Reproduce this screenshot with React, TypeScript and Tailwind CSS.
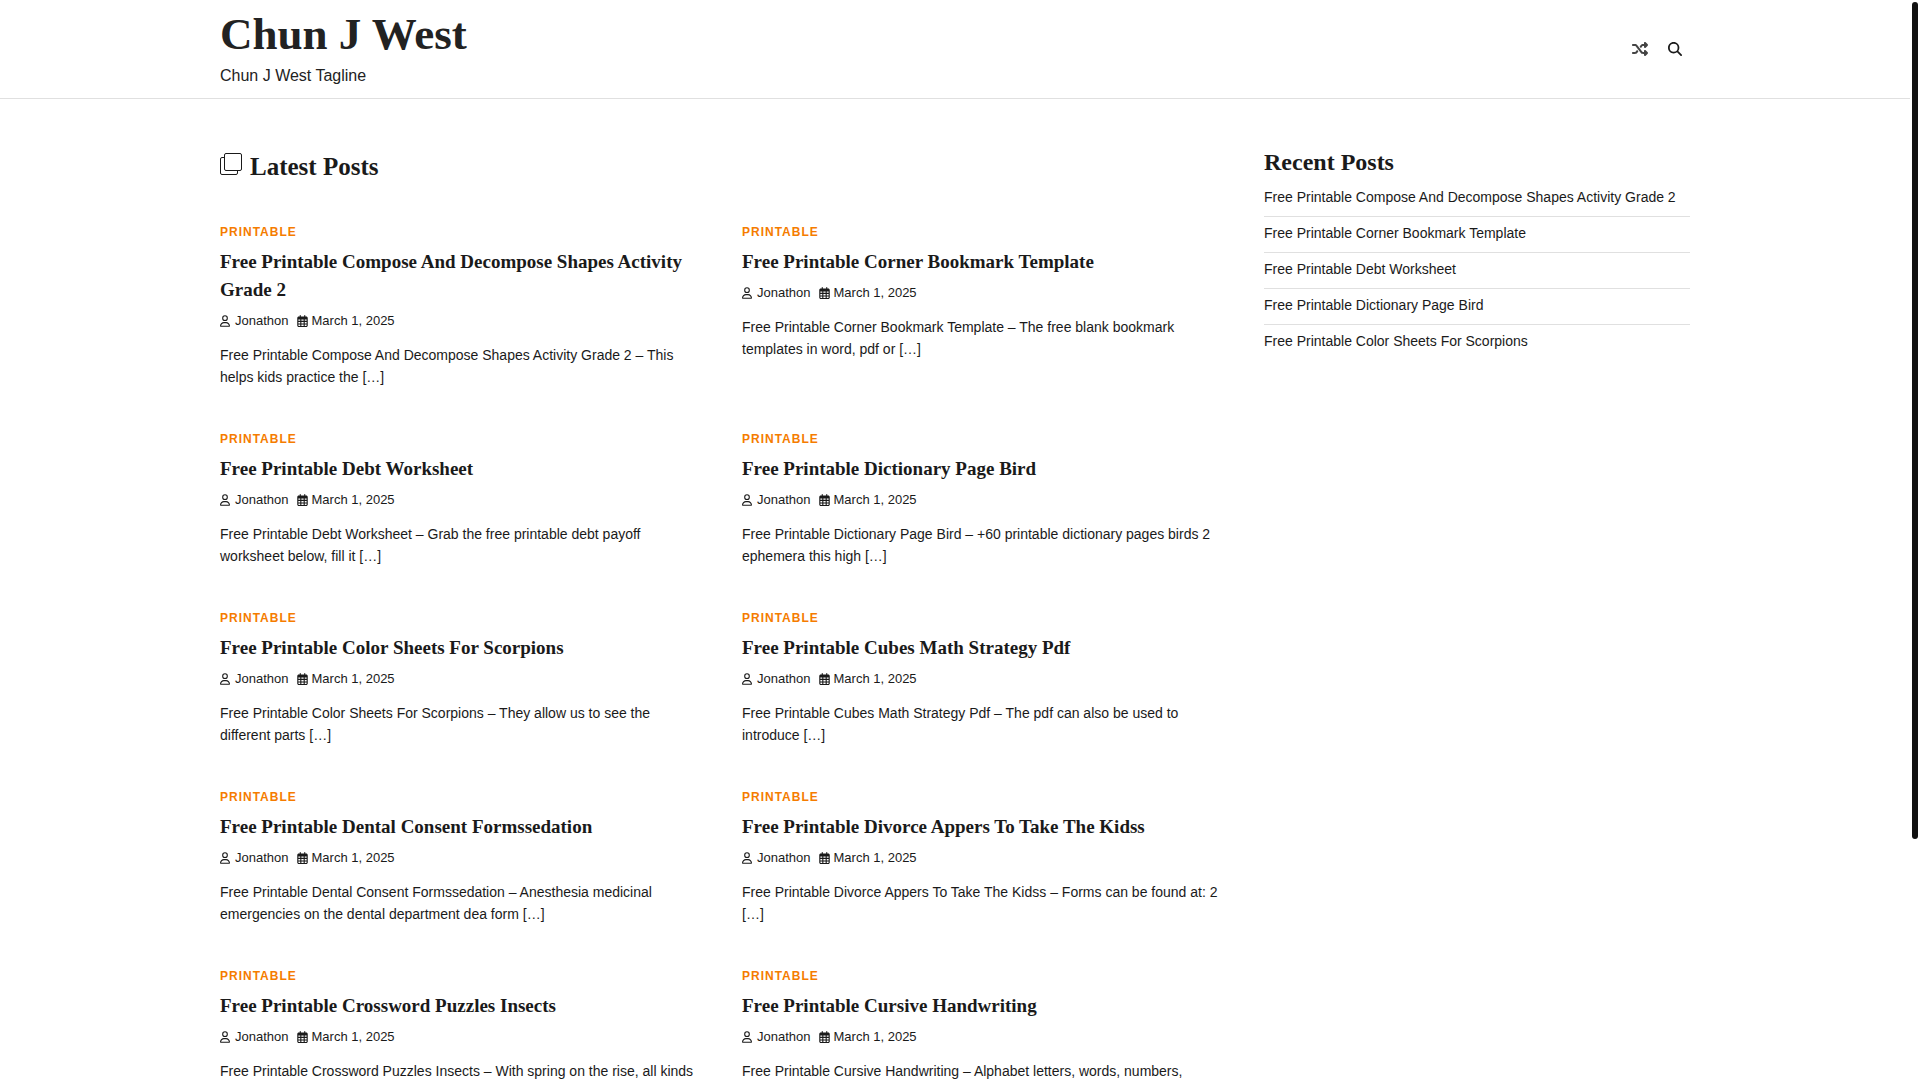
import { FC } from "react";
import { FaMagnifyingGlass, FaRegUser, FaShuffle } from "react-icons/fa6";

interface PostType {
  title: string;
  excerpt: string;
}

const posts: PostType[] = [
  {
    title: "Free Printable Compose And Decompose Shapes Activity Grade 2",
    excerpt:
      "Free Printable Compose And Decompose Shapes Activity Grade 2 – This helps kids practice the […]",
  },
  {
    title: "Free Printable Corner Bookmark Template",
    excerpt:
      "Free Printable Corner Bookmark Template – The free blank bookmark templates in word, pdf or […]",
  },
  {
    title: "Free Printable Debt Worksheet",
    excerpt:
      "Free Printable Debt Worksheet – Grab the free printable debt payoff worksheet below, fill it […]",
  },
  {
    title: "Free Printable Dictionary Page Bird",
    excerpt:
      "Free Printable Dictionary Page Bird – +60 printable dictionary pages birds 2 ephemera this high […]",
  },
  {
    title: "Free Printable Color Sheets For Scorpions",
    excerpt:
      "Free Printable Color Sheets For Scorpions – They allow us to see the different parts […]",
  },
  {
    title: "Free Printable Cubes Math Strategy Pdf",
    excerpt:
      "Free Printable Cubes Math Strategy Pdf – The pdf can also be used to introduce […]",
  },
  {
    title: "Free Printable Dental Consent Formssedation",
    excerpt:
      "Free Printable Dental Consent Formssedation – Anesthesia medicinal emergencies on the dental department dea form […]",
  },
  {
    title: "Free Printable Divorce Appers To Take The Kidss",
    excerpt:
      "Free Printable Divorce Appers To Take The Kidss – Forms can be found at: 2 […]",
  },
  {
    title: "Free Printable Crossword Puzzles Insects",
    excerpt:
      "Free Printable Crossword Puzzles Insects – With spring on the rise, all kinds",
  },
  {
    title: "Free Printable Cursive Handwriting",
    excerpt:
      "Free Printable Cursive Handwriting – Alphabet letters, words, numbers,",
  },
];

const recentPosts = [
  "Free Printable Compose And Decompose Shapes Activity Grade 2",
  "Free Printable Corner Bookmark Template",
  "Free Printable Debt Worksheet",
  "Free Printable Dictionary Page Bird",
  "Free Printable Color Sheets For Scorpions",
];

const CalendarIcon: FC = () => {
  return (
    <svg className="h-3 w-[11px]" viewBox="0 0 448 512" fill="currentColor">
      <path
        fillRule="evenodd"
        d="M128 0c13 0 24 11 24 24v40h144V24c0-13 11-24 24-24s24 11 24 24v40h40c35 0 64 29 64 64v320c0 35-29 64-64 64H64c-35 0-64-29-64-64V128c0-35 29-64 64-64h40V24c0-13 11-24 24-24zM48 192v56h80v-56zM176 192v56h96v-56zM320 192v56h80v-56zM48 296v64h80v-64zM176 296v64h96v-64zM320 296v64h80v-64zM48 408v40c0 9 7 16 16 16h64v-56zM176 408v56h96v-56zM320 408v56h64c9 0 16-7 16-16v-40z"
      />
    </svg>
  );
};

const Header: FC = () => {
  return (
    <header className="border-b border-[#e0e0e0]">
      <div className="mx-auto flex max-w-[1500px] items-center justify-between px-[15px]">
        <div className="pt-1 pb-2.5">
          <h1 className="font-['Liberation_Serif',serif] text-[45px] leading-[60px] font-bold text-[#222]">
            <a href="#">Chun J West</a>
          </h1>
          <p className="text-base text-[#222]">Chun J West Tagline</p>
        </div>

        <div className="flex items-center gap-5 pr-2">
          <a href="#" aria-label="random post">
            <FaShuffle className="size-4 text-[#444]" />
          </a>
          <button type="button" aria-label="search">
            <FaMagnifyingGlass className="size-[14px]" />
          </button>
        </div>
      </div>
    </header>
  );
};

const PostCard: FC<PostType> = ({ title, excerpt }) => {
  return (
    <article>
      <a
        href="#"
        className="block text-xs leading-5 font-bold tracking-[1px] text-[#f57c00] uppercase"
      >
        Printable
      </a>
      <h3 className="mt-1.5 font-['Liberation_Serif',serif] text-[19px] leading-7 font-bold">
        <a href="#">{title}</a>
      </h3>
      <div className="mt-[7px] flex items-center gap-2 text-[13px] leading-5">
        <a href="#" className="flex items-center gap-[5px]">
          <FaRegUser className="h-3 w-[10px]" />
          Jonathon
        </a>
        <a href="#" className="flex items-center gap-1">
          <CalendarIcon />
          March 1, 2025
        </a>
      </div>
      <p className="mt-[13px] max-w-[480px] text-sm leading-[22px]">
        {excerpt}
      </p>
    </article>
  );
};

const App: FC = () => {
  return (
    <div className="flex h-screen bg-white font-['Liberation_Sans',sans-serif] text-[#1a1a1a]">
      <div className="min-w-0 flex-1 overflow-y-auto [scrollbar-width:none]">
        <Header />

        <div className="mx-auto flex max-w-[1500px] gap-[30px] px-[15px] pt-[50px] pb-20">
          <main className="min-w-0 flex-1">
            <h2 className="flex items-baseline gap-2 font-['Liberation_Serif',serif] text-[25px] leading-9 font-bold">
              <svg
                className="size-[22px]"
                viewBox="0 0 22 22"
                fill="none"
                stroke="currentColor"
              >
                <rect x="4.5" y="0.5" width="17" height="17" rx="1.5" />
                <path d="M4.500 4.500H2A1.500 1.500 0 0 0 .5 6v14A1.500 1.500 0 0 0 2 21.500h14a1.500 1.500 0 0 0 1.500-1.500v-2.500" />
              </svg>
              Latest Posts
            </h2>

            <div className="mt-[37px] grid grid-cols-2 gap-x-[30px] gap-y-[41px]">
              {posts.map((post) => (
                <PostCard key={post.title} {...post} />
              ))}
            </div>
          </main>

          <aside className="w-[426px] shrink-0">
            <h2 className="font-['Liberation_Serif',serif] text-2xl leading-[26px] font-bold">
              Recent Posts
            </h2>
            <ul className="mt-1.5 divide-y divide-[#e0e0e0]">
              {recentPosts.map((title) => (
                <li key={title} className="pt-1.5 pb-2 text-sm leading-[21px]">
                  <a href="#">{title}</a>
                </li>
              ))}
            </ul>
          </aside>
        </div>
      </div>

      <div className="w-2.5 shrink-0 p-0.5">
        <div className="h-7/9 rounded-full bg-[#111]" />
      </div>
    </div>
  );
};

export default App;
